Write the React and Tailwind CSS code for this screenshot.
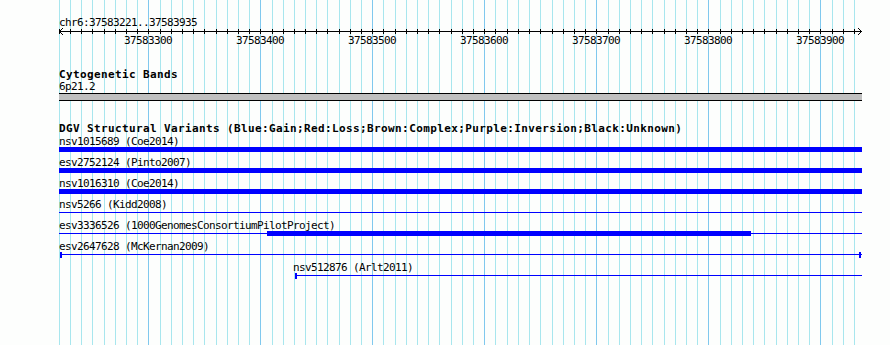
import React from "react";

const GRID = Array.from({ length: 72 }, (_, i) => ({
  x: Math.floor(59.2 + 11.2 * i),
  major: i % 10 === 8,
}));
const MAJORS = GRID.filter((g) => g.major);
const START = 37583200;

const txt =
  "h-[12px] whitespace-nowrap text-[11px] leading-[13px] tracking-[-0.62px] text-black";
const bold =
  "whitespace-nowrap text-[11px] font-bold leading-[13px] tracking-[0.38px] text-black";

function Ruler() {
  return (
    <svg width="803" height="21" className="block overflow-visible" shapeRendering="crispEdges">
      <rect x="0" y="3" width="803" height="1" fill="#000" />
      {GRID.map((g, i) => (
        <rect key={i} x={g.x - 59} y="1" width="1" height="5" fill="#000" />
      ))}
      {[
        [1, 2], [2, 1], [3, 0], [1, 4], [2, 5], [3, 6],
        [801, 2], [800, 1], [799, 0], [801, 4], [800, 5], [799, 6],
      ].map(([x, y], i) => (
        <rect key={"a" + i} x={x} y={y} width="1" height="1" fill="#000" />
      ))}
      {MAJORS.map((g, i) => (
        <text
          key={"t" + i}
          x={g.x - 59 - 24}
          y="16"
          fill="#000"
          style={{
            fontFamily: "'DejaVu Sans Mono', 'Liberation Mono', monospace",
            fontSize: "11px",
            letterSpacing: "-0.62px",
          }}
        >
          {START + 100 * (i + 1)}
        </text>
      ))}
    </svg>
  );
}

function Row({ label, labelOffset = 0, children }) {
  return (
    <div className="flex flex-col pb-[4px]">
      <div className={txt} style={{ marginLeft: labelOffset }}>
        {label}
      </div>
      <div className="flex h-[5px] w-full items-center">{children}</div>
    </div>
  );
}

export default function App() {
  return (
    <div className="relative h-[345px] w-[890px] overflow-hidden bg-[#fdfefd] font-['DejaVu_Sans_Mono','Liberation_Mono',monospace]">
      <svg
        className="absolute inset-0"
        width="890"
        height="345"
        shapeRendering="crispEdges"
      >
        {GRID.map((g, i) => (
          <rect
            key={i}
            x={g.x}
            y="0"
            width="1"
            height="345"
            fill={g.major ? "#80c8ee" : "#a8e6ee"}
          />
        ))}
      </svg>

      <div className="relative flex w-[862px] flex-col pl-[59px]">
        <div className={`mt-[16px] ${txt}`}>chr6:37583221..37583935</div>
        <Ruler />

        <div className={`mt-[19px] h-[12px] ${bold}`}>Cytogenetic Bands</div>
        <div className={`${txt} h-[13px]`}>6p21.2</div>
        <div className="h-[8px] w-full border-y border-black bg-[#c0c0c0]" />

        <div className={`mt-[21px] h-[13px] ${bold}`}>
          DGV Structural Variants (Blue:Gain;Red:Loss;Brown:Complex;Purple:Inversion;Black:Unknown)
        </div>

        <Row label="nsv1015689 (Coe2014)">
          <div className="h-[5px] w-full bg-[#0000ff]" />
        </Row>
        <Row label="esv2752124 (Pinto2007)">
          <div className="h-[5px] w-full bg-[#0000ff]" />
        </Row>
        <Row label="nsv1016310 (Coe2014)">
          <div className="h-[5px] w-full bg-[#0000ff]" />
        </Row>
        <Row label="nsv5266 (Kidd2008)">
          <div className="h-px w-full bg-[#0000ff]" />
        </Row>
        <Row label="esv3336526 (1000GenomesConsortiumPilotProject)">
          <div className="h-px w-[208px] bg-[#0000ff]" />
          <div className="h-[5px] w-[484px] bg-[#0000ff]" />
          <div className="h-px flex-1 bg-[#0000ff]" />
        </Row>
        <Row label="esv2647628 (McKernan2009)">
          <div className="w-px" />
          <div className="h-[6px] w-[2px] bg-[#0000ff]" />
          <div className="h-px flex-1 bg-[#0000ff]" />
          <div className="h-[6px] w-[2px] bg-[#0000ff]" />
          <div className="h-px w-px bg-[#0000ff]" />
        </Row>
        <Row label="nsv512876 (Arlt2011)" labelOffset={234}>
          <div className="w-[236px]" />
          <div className="h-[6px] w-[2px] bg-[#0000ff]" />
          <div className="h-px flex-1 bg-[#0000ff]" />
        </Row>
      </div>
    </div>
  );
}
